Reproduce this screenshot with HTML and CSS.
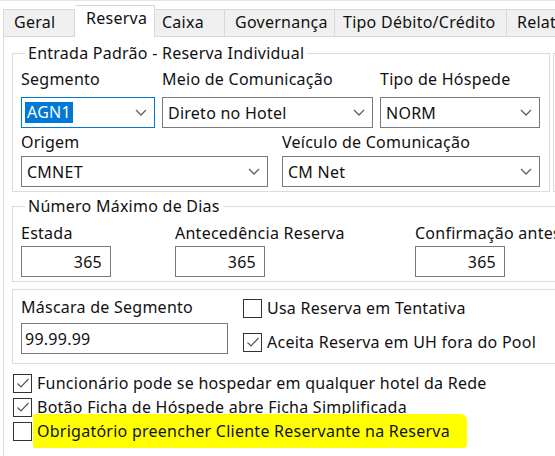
FILE: index.html
```html
<!DOCTYPE html>
<html lang="pt-BR">
<head>
    <meta charset="UTF-8">
    <meta name="viewport" content="width=device-width, initial-scale=1.0">
    <title>Parâmetros - Reserva</title>
    <link rel="stylesheet" href="styles.css">
</head>
<body>
    <div class="window">
        <div class="tabs">
            <div class="tab tab-geral">Geral</div>
            <div class="tab tab-reserva active">Reserva</div>
            <div class="tab tab-caixa">Caixa</div>
            <div class="tab tab-gov">Governança</div>
            <div class="tab tab-tipo">Tipo Débito/Crédito</div>
            <div class="tab tab-relat">Relatórios</div>
        </div>

        <div class="page">
            <!-- Entrada padrão + grupo vizinho (cortado na borda) -->
            <div class="row-top">
                <fieldset class="group group-entrada">
                    <legend>Entrada Padrão - Reserva Individual</legend>
                    <div class="grid grid-1">
                        <label class="lbl">Segmento</label>
                        <label class="lbl">Meio de Comunicação</label>
                        <label class="lbl">Tipo de Hóspede</label>
                        <div class="combo focused"><span class="sel">AGN1</span><svg class="chev" width="12" height="7" viewBox="0 0 12 7"><path d="M1 1l5 5 5-5" /></svg></div>
                        <div class="combo"><span>Direto no Hotel</span><svg class="chev" width="12" height="7" viewBox="0 0 12 7"><path d="M1 1l5 5 5-5" /></svg></div>
                        <div class="combo"><span>NORM</span><svg class="chev" width="12" height="7" viewBox="0 0 12 7"><path d="M1 1l5 5 5-5" /></svg></div>
                    </div>
                    <div class="grid grid-2">
                        <label class="lbl">Origem</label>
                        <label class="lbl">Veículo de Comunicação</label>
                        <div class="combo"><span>CMNET</span><svg class="chev" width="12" height="7" viewBox="0 0 12 7"><path d="M1 1l5 5 5-5" /></svg></div>
                        <div class="combo"><span>CM Net</span><svg class="chev" width="12" height="7" viewBox="0 0 12 7"><path d="M1 1l5 5 5-5" /></svg></div>
                    </div>
                </fieldset>
                <fieldset class="group group-side"></fieldset>
            </div>

            <fieldset class="group group-dias">
                <legend>Número Máximo de Dias</legend>
                <div class="dias">
                    <div class="dia dia-estada">
                        <label class="lbl">Estada</label>
                        <div class="num">365</div>
                    </div>
                    <div class="dia dia-antec">
                        <label class="lbl">Antecedência Reserva</label>
                        <div class="num">365</div>
                    </div>
                    <div class="dia dia-conf">
                        <label class="lbl">Confirmação antes</label>
                        <div class="num">365</div>
                    </div>
                </div>
            </fieldset>

            <fieldset class="group group-mascara">
                <div class="mascara">
                    <div class="mascara-campo">
                        <label class="lbl">Máscara de Segmento</label>
                        <div class="edit">99.99.99</div>
                    </div>
                    <div class="mascara-opcoes">
                        <div class="check"><span class="box"></span><span>Usa Reserva em Tentativa</span></div>
                        <div class="check"><span class="box checked"><svg width="16" height="16" viewBox="0 0 16 16"><path d="M2.5 8.5l3.5 3.5 7.5-8" /></svg></span><span>Aceita Reserva em UH fora do Pool</span></div>
                    </div>
                </div>
            </fieldset>

            <div class="opcoes">
                <div class="check"><span class="box checked"><svg width="16" height="16" viewBox="0 0 16 16"><path d="M2.5 8.5l3.5 3.5 7.5-8" /></svg></span><span>Funcionário pode se hospedar em qualquer hotel da Rede</span></div>
                <div class="check"><span class="box checked"><svg width="16" height="16" viewBox="0 0 16 16"><path d="M2.5 8.5l3.5 3.5 7.5-8" /></svg></span><span>Botão Ficha de Hóspede abre Ficha Simplificada</span></div>
                <div class="check check-obrig"><span class="box"></span><span class="marca">Obrigatório preencher Cliente Reservante na Reserva</span></div>
            </div>
        </div>
    </div>
</body>
</html>
```

FILE: styles.css
```css
* {
    box-sizing: border-box;
}

body {
    margin: 0;
    background: #ffffff;
    font-family: "Noto Sans", "Open Sans", sans-serif;
    font-size: 16px;
    letter-spacing: 0.25px;
    line-height: 20px;
    color: #111111;
}

.window {
    width: 555px;
    height: 456px;
    overflow: hidden;
    background: #ffffff;
    border-top: 1px solid #e6e6e6;
}

/* Abas */
.tabs {
    display: flex;
    align-items: flex-end;
    height: 35px;
    padding-left: 3px;
    position: relative;
    z-index: 1;
}

.tab {
    flex: none;
    height: 27px;
    padding: 2px 0 0 10px;
    background: #f0f0f0;
    border: 1px solid #d9d9d9;
    border-bottom: none;
    border-left: none;
    white-space: nowrap;
    overflow: hidden;
}

.tab-geral {
    width: 72px;
    border-left: 1px solid #d9d9d9;
}

.tab.active {
    height: 32px;
    margin-bottom: -1px;
    padding-top: 2px;
    padding-left: 11px;
    background: #ffffff;
    border-left: none;
}

.tab-reserva { width: 80px; }
.tab-caixa { width: 70px; padding-left: 7px; }
.tab-gov { width: 110px; }
.tab-tipo { width: 172px; padding-left: 8px; }
.tab-relat { width: 80px; }

.page {
    width: 640px;
    min-height: 420px;
    margin-left: 3px;
    padding: 0 0 0 8px;
    border-left: 1px solid #d9d9d9;
    border-top: 1px solid #d9d9d9;
}

/* Group boxes */
.group {
    margin: 0;
    padding: 0 8px 4px;
    border: 1px solid #dcdcdc;
    min-width: 0;
}

.group legend {
    margin-left: 4px;
    padding: 0 3px;
    line-height: 20px;
}

.row-top {
    display: flex;
    gap: 3px;
    margin-top: 6px;
}

.group-entrada {
    width: 538px;
    flex: none;
}

.group-side {
    flex: 1;
    margin-top: 10px;
    height: 139px;
}

.lbl {
    display: block;
    white-space: nowrap;
}

.grid {
    display: grid;
    column-gap: 7px;
}

.grid-1 {
    grid-template-columns: 134px 211px 160px;
    margin-top: 6px;
    row-gap: 8px;
}

.grid-2 {
    grid-template-columns: 247px 258px;
    column-gap: 14px;
    margin-top: 4px;
    row-gap: 4px;
}

.combo {
    height: 31px;
    display: flex;
    align-items: center;
    justify-content: space-between;
    padding: 0 7px 0 5px;
    border: 1px solid #7a7a7a;
    background: #ffffff;
    white-space: nowrap;
}

.combo.focused {
    border-color: #0078d7;
    padding-left: 3px;
}

.combo .sel {
    background: #0078d7;
    color: #ffffff;
    padding: 0 2px;
    line-height: 21px;
}

.chev {
    flex: none;
}

.chev path {
    fill: none;
    stroke: #606060;
    stroke-width: 1.3;
}

/* Número máximo de dias */
.group-dias {
    margin-top: 4px;
}

.dias {
    display: flex;
    margin-top: 7px;
}

.dia .lbl {
    margin-bottom: 3px;
}

.dia-estada { width: 154px; }
.dia-antec { width: 240px; }

.num,
.edit {
    height: 31px;
    border: 1px solid #7a7a7a;
    display: flex;
    align-items: center;
    white-space: nowrap;
}

.num {
    width: 90px;
    justify-content: flex-end;
    padding-right: 8px;
}

/* Máscara */
.group-mascara {
    margin-top: 7px;
    padding: 7px 8px 9px;
}

.mascara {
    display: flex;
    gap: 15px;
}

.mascara-campo .lbl {
    margin-bottom: 6px;
}

.edit {
    width: 207px;
    padding-left: 3px;
}

.mascara-opcoes {
    display: flex;
    flex-direction: column;
    gap: 14px;
    padding-top: 1px;
}

/* Caixas de seleção */
.check {
    display: flex;
    align-items: center;
    gap: 5px;
    height: 20px;
    white-space: nowrap;
}

.box {
    flex: none;
    width: 19px;
    height: 19px;
    border: 1px solid #333333;
    background: #ffffff;
    display: flex;
    align-items: center;
    justify-content: center;
}

.box svg path {
    fill: none;
    stroke: #555555;
    stroke-width: 1.2;
}

.opcoes {
    margin-top: 9px;
    margin-left: 1px;
}

.opcoes .check + .check {
    margin-top: 4px;
}

.opcoes .check-obrig {
    margin-top: 7px;
}

/* Marca-texto amarelo */
.marca {
    background: #ffff00;
    margin-left: -4px;
    padding: 7px 17px 7px 4px;
    border-radius: 3px 6px 4px 2px;
}
```
